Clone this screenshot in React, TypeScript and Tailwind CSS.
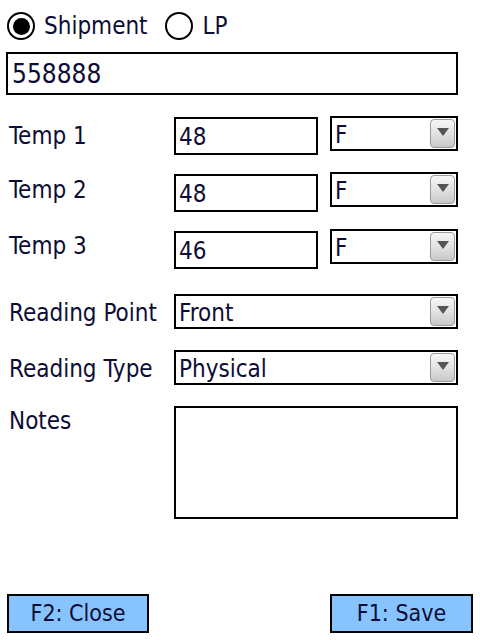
import React from "react";

const font = { fontFamily: '"DejaVu Sans Condensed", "Liberation Sans", sans-serif' };

function Arrow() {
  return (
    <div className="mr-[1px] w-[25px] h-[29px] rounded-[4px] border border-[#9a9a9a] bg-gradient-to-b from-[#f6f6f6] via-[#e2e2e2] to-[#c8c8c8] flex items-center justify-center">
      <svg width="12" height="8" viewBox="0 0 12 8" className="mb-[3px]">
        <polygon points="0,0 12,0 6,8" fill="#555555" />
      </svg>
    </div>
  );
}

function Select({ value, w }: { value: string; w: string }) {
  return (
    <div className={`${w} h-[35px] border-2 border-black flex items-center justify-between`}>
      <span className="pl-[3px] mt-[2px] text-[24px] leading-none text-[#0d0d35]">{value}</span>
      <Arrow />
    </div>
  );
}

function Input({ value }: { value: string }) {
  return (
    <div className="w-[144px] h-[38px] border-2 border-black flex items-center">
      <span className="pl-[3px] text-[24px] leading-none text-[#0d0d35] mt-[2px]">{value}</span>
    </div>
  );
}

function Label({ text, mt }: { text: string; mt: string }) {
  return (
    <div className={`ml-[9px] w-[165px] ${mt} text-[24px] leading-[28px] text-[#0d0d35]`}>{text}</div>
  );
}

export default function App() {
  return (
    <div className="w-[480px] h-[640px] bg-white flex flex-col" style={font}>
      <div className="mt-[12px] h-[28px] flex items-center">
        <div className="ml-[7px] w-[28px] h-[28px] rounded-full border-2 border-black flex items-center justify-center">
          <div className="w-[17px] h-[17px] rounded-full bg-black" />
        </div>
        <span className="ml-[9px] text-[24px] leading-none text-[#0d0d35]">Shipment</span>
        <div className="ml-[17px] w-[28px] h-[28px] rounded-full border-2 border-black" />
        <span className="ml-[10px] text-[24px] leading-none text-[#0d0d35]">LP</span>
      </div>

      <div className="mt-[12px] ml-[6px] w-[452px] h-[43px] border-2 border-black flex items-center">
        <span className="pl-[4px] mt-[1px] text-[26px] leading-none text-[#0d0d35]">558888</span>
      </div>

      <div className="mt-[21px] h-[39px] flex items-start">
        <Label text="Temp 1" mt="mt-[6px]" />
        <div className="mt-[1px]"><Input value="48" /></div>
        <div className="ml-[12px]"><Select value="F" w="w-[128px]" /></div>
      </div>

      <div className="mt-[17px] h-[41px] flex items-start">
        <Label text="Temp 2" mt="mt-[4px]" />
        <div className="mt-[2px]"><Input value="48" /></div>
        <div className="ml-[12px]"><Select value="F" w="w-[128px]" /></div>
      </div>

      <div className="mt-[16px] h-[40px] flex items-start">
        <Label text="Temp 3" mt="mt-[3px]" />
        <div className="mt-[2px]"><Input value="46" /></div>
        <div className="ml-[12px]"><Select value="F" w="w-[128px]" /></div>
      </div>

      <div className="mt-[25px] flex items-start">
        <Label text="Reading Point" mt="mt-[5px]" />
        <Select value="Front" w="w-[284px]" />
      </div>

      <div className="mt-[21px] flex items-start">
        <Label text="Reading Type" mt="mt-[5px]" />
        <Select value="Physical" w="w-[284px]" />
      </div>

      <div className="mt-[21px] flex items-start">
        <Label text="Notes" mt="mt-[1px]" />
        <div className="w-[284px] h-[113px] border-2 border-black" />
      </div>

      <div className="mt-auto mb-[7px] px-[7px] flex justify-between">
        <div className="w-[142px] h-[39px] border-2 border-black bg-[#87c4ff] flex items-center justify-center text-[23px] leading-none text-[#0d0d35]">
          F2: Close
        </div>
        <div className="w-[143px] h-[39px] border-2 border-black bg-[#87c4ff] flex items-center justify-center text-[23px] leading-none text-[#0d0d35]">
          F1: Save
        </div>
      </div>
    </div>
  );
}
